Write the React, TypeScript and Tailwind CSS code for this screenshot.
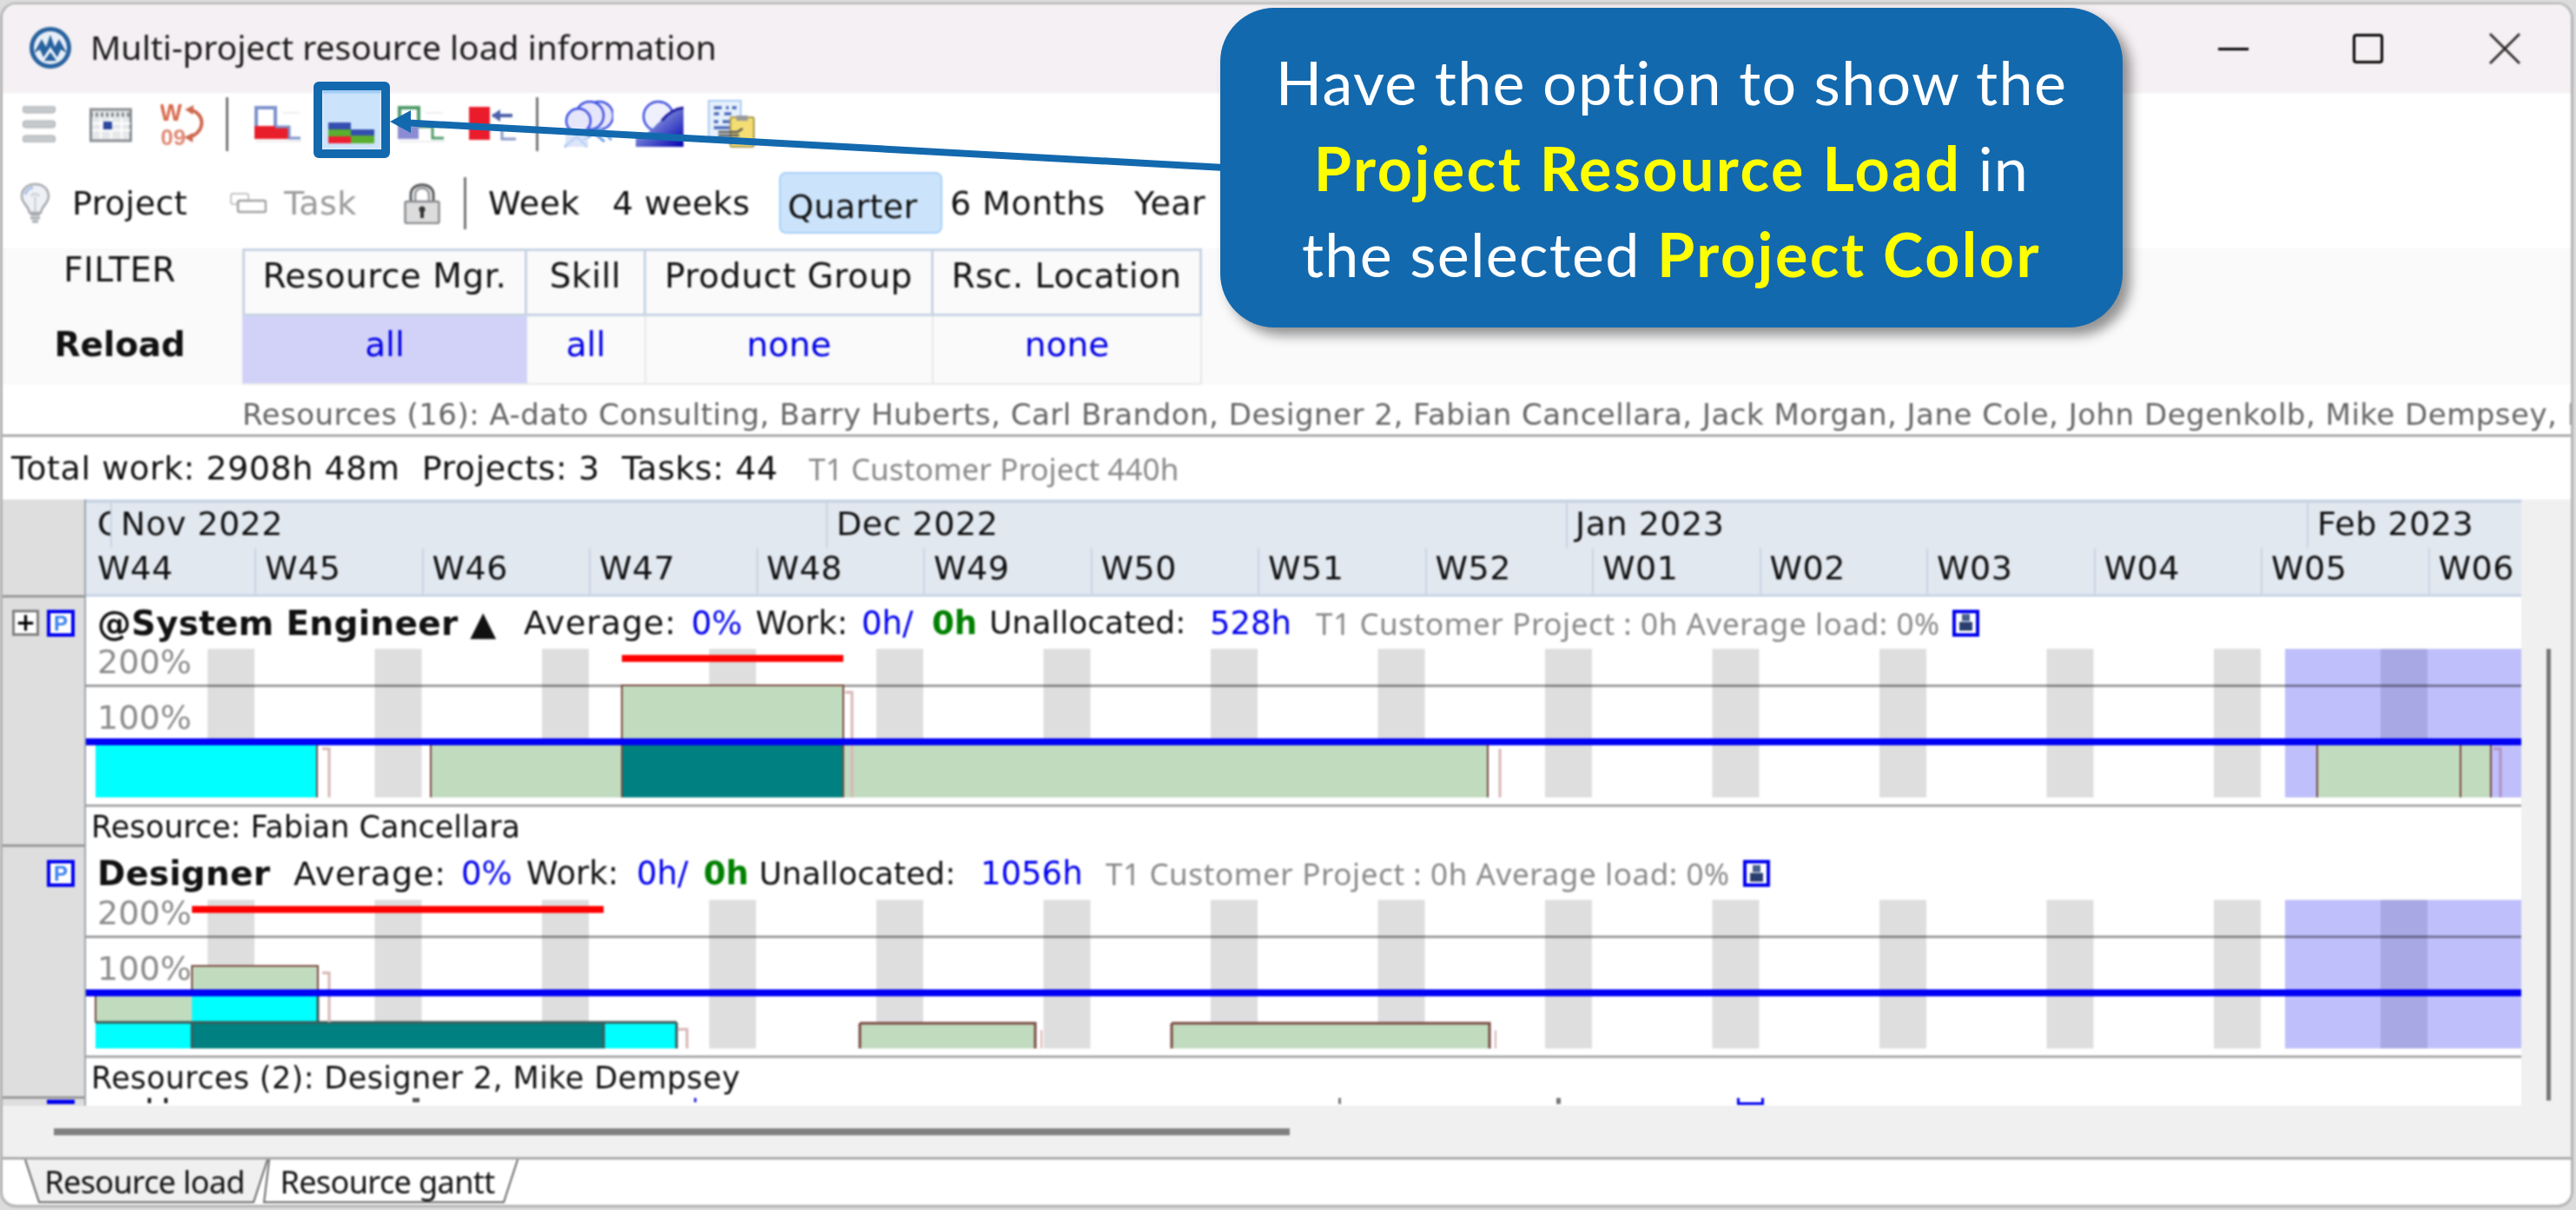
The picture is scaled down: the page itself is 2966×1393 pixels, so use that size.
import React from "react";

const STRIPES = [0, 1, 2, 3, 4, 5, 6, 7, 8, 9, 10, 11, 12].map((i) => 140 + 192.5 * i);
const WEEKS = ["W45", "W46", "W47", "W48", "W49", "W50", "W51", "W52", "W01", "W02", "W03", "W04", "W05", "W06"];
const GREEN = "#c1dbbf";
const BROWN = "#7a4a42";
const TEAL = "#008080";
const CYAN = "#00ffff";
const FAINT = "#d9b4b4";

function Logo() {
  return (
    <svg width="50" height="50" viewBox="0 0 50 50">
      <circle cx="25" cy="25" r="24" fill="#27629f" />
      <circle cx="25" cy="25" r="19" fill="#e8eef6" />
      <path d="M6 31 L15 15 L20 24 L25 10 L30 24 L35 15 L44 31 L37 27 L33 36 L25 24 L17 36 L13 27 Z" fill="#27629f" />
      <path d="M25 30 L18 40 L32 40 Z" fill="#27629f" />
    </svg>
  );
}

function Hamburger() {
  return (
    <svg width="38" height="42" viewBox="0 0 38 42">
      {[0, 17, 34].map((y) => (
        <rect key={y} x="0.5" y={y} width="37" height="8" rx="3" fill="#c6c9cc" stroke="#a8abae" />
      ))}
    </svg>
  );
}

function CalendarIcon() {
  return (
    <svg width="49" height="42" viewBox="0 0 49 42">
      <rect x="1.5" y="4" width="46" height="36" fill="#e6e8ea" stroke="#8a8e92" strokeWidth="3" />
      <path d="M1 10 H48" stroke="#8a8e92" strokeWidth="5" strokeDasharray="3 3" />
      <path d="M13 14 V38 M25 14 V38 M37 14 V38 M3 20 H47 M3 28 H47" stroke="#ffffff" strokeWidth="2" />
      <rect x="16" y="18" width="10" height="9" fill="#2f49a0" />
    </svg>
  );
}

function WeekIcon() {
  return (
    <svg width="52" height="50" viewBox="0 0 52 50">
      <text x="-1" y="21" fontFamily="'Liberation Sans',sans-serif" fontWeight="700" fontSize="27" fill="#d9694c">W</text>
      <text x="0" y="49" fontFamily="'Liberation Sans',sans-serif" fontWeight="700" fontSize="26" fill="#e08a74">09</text>
      <path d="M33 8 C52 12 52 34 33 40" fill="none" stroke="#cf6a50" strokeWidth="4" />
      <path d="M28 8 L38 3 L37 14 Z M27 40 L37 35 L37 46 Z" fill="#cf6a50" />
    </svg>
  );
}

function LoadIcon({ line, fill, low }: { line: string; fill: string; low: string }) {
  return (
    <svg width="54" height="42" viewBox="0 0 54 42">
      <path d="M32 8 H52 M2 41 H54" stroke="#eceef0" strokeWidth="2" />
      <path d="M2 24 V2 H24 V24" fill="none" stroke={line} strokeWidth="4" />
      <rect x="0" y="23" width={low === "wide" ? 41 : 24} height="15" fill={fill} />
      <path d="M24 24 H40 V37 H53" fill="none" stroke={line} strokeWidth="3" />
    </svg>
  );
}

function StackIcon() {
  return (
    <svg width="54" height="24" viewBox="0 0 54 24">
      <rect x="0" y="0" width="26" height="8" fill="#344fb0" />
      <rect x="0" y="8" width="26" height="8" fill="#5aae2e" />
      <rect x="0" y="16" width="26" height="8" fill="#ee1f33" />
      <rect x="26" y="8" width="27" height="7" fill="#344fb0" />
      <rect x="26" y="15" width="27" height="9" fill="#5aae2e" />
    </svg>
  );
}

function RedArrowIcon() {
  return (
    <svg width="55" height="42" viewBox="0 0 55 42">
      <rect x="0" y="1" width="24" height="38" fill="#ea1c2c" />
      <path d="M27 11 H50" stroke="#4d62ac" strokeWidth="4" />
      <path d="M26 11 L36 4 V18 Z" fill="#4d62ac" />
      <path d="M38 22 V38 H54" fill="none" stroke="#8a98c8" strokeWidth="3" />
    </svg>
  );
}

function PeopleIcon() {
  return (
    <svg width="56" height="56" viewBox="0 0 56 56">
      {[40, 29, 16].map((x, i) => (
        <g key={x}>
          <circle cx={x} cy={i === 2 ? 24 : 18} r={i === 2 ? 14 : 16} fill="#e6e6fb" stroke="#3d4fe0" strokeWidth="2.5" />
        </g>
      ))}
      <path d="M0 54 L14 42 L26 54 M22 46 L34 38 L46 48 M32 36 L42 34 L54 46" fill="none" stroke="#6ea0e8" strokeWidth="3" />
      <rect x="1" y="34" width="26" height="20" fill="#d5e0f8" opacity="0.8" />
    </svg>
  );
}

function SlopeIcon() {
  return (
    <svg width="56" height="56" viewBox="0 0 56 56">
      <defs>
        <linearGradient id="sl" x1="0" y1="0" x2="1" y2="1">
          <stop offset="0" stopColor="#c0d4f0" />
          <stop offset="1" stopColor="#0000b0" />
        </linearGradient>
      </defs>
      <circle cx="26" cy="19" r="17" fill="#eef0fc" stroke="#3d4fe0" strokeWidth="2.5" />
      <path d="M0 54 V44 C20 42 30 12 55 9 V54 Z" fill="url(#sl)" />
      <path d="M30 24 C38 14 46 10 55 9" fill="none" stroke="#2020a0" strokeWidth="3" />
    </svg>
  );
}

function ReportIcon() {
  return (
    <svg width="56" height="56" viewBox="0 0 56 56">
      <rect x="1" y="1" width="37" height="42" fill="#e6f0fd" stroke="#a9cdf2" strokeWidth="2" />
      <path d="M7 9 H16 M21 9 H24 M28 9 H33 M7 16 H13 M19 16 H27 M7 25 H12 M17 25 H25 M7 32 H33" stroke="#4a6ab8" strokeWidth="3.5" />
      <rect x="26" y="20" width="27" height="34" rx="2" fill="#f4dd72" stroke="#a89a50" strokeWidth="2" />
      <rect x="33" y="18" width="13" height="6" fill="#9a9a9a" />
      <path d="M12 37 H34 L40 33 M12 41 H36" stroke="#555" strokeWidth="2.5" fill="none" />
    </svg>
  );
}

function BulbIcon() {
  return (
    <svg width="35" height="48" viewBox="0 0 35 48">
      <path d="M17.5 2 C7 2 2 9 2 16 C2 24 10 27 11 35 H24 C25 27 33 24 33 16 C33 9 28 2 17.5 2 Z" fill="#eef1f5" stroke="#a6a9ad" strokeWidth="2.5" />
      <path d="M12 37 H23 M12 41 H23 M14 45 H21" stroke="#a6a9ad" strokeWidth="3" />
      <path d="M13 16 C15 12 20 12 22 16 M17.5 16 V34" stroke="#c8ccd2" strokeWidth="2" fill="none" />
      <path d="M6 14 C7 9 11 6 15 6" stroke="#a8c0e8" strokeWidth="3" fill="none" />
    </svg>
  );
}

function TaskIcon() {
  return (
    <svg width="42" height="24" viewBox="0 0 42 24">
      <rect x="1" y="1" width="20" height="12" rx="2" fill="#ffffff" stroke="#c4c4c4" strokeWidth="2" />
      <rect x="9" y="9" width="32" height="13" rx="2" fill="#ffffff" stroke="#a0a0a0" strokeWidth="2.5" />
    </svg>
  );
}

function LockIcon() {
  return (
    <svg width="42" height="48" viewBox="0 0 42 48">
      <path d="M8 22 V14 C8 -1 34 -1 34 14 V22" fill="none" stroke="#55585a" strokeWidth="3" />
      <path d="M13 22 V14 C13 4 29 4 29 14 V22" fill="none" stroke="#9a9da0" strokeWidth="3" />
      <rect x="1.5" y="22" width="39" height="25" rx="2" fill="#dcdcdc" stroke="#8a8d90" strokeWidth="2.5" />
      <circle cx="21" cy="31" r="3.5" fill="#333" />
      <rect x="19" y="32" width="4" height="9" fill="#333" />
    </svg>
  );
}

function PersonBox() {
  return (
    <div className="w-[31px] h-[31px] shrink-0 border-[4px] border-[#0000f0] bg-white flex items-center justify-center">
      <svg width="15" height="20" viewBox="0 0 15 20">
        <rect x="3" y="0" width="9" height="8" fill="#4a6090" />
        <rect x="0" y="9" width="15" height="10" fill="#2a3f70" />
      </svg>
    </div>
  );
}

function PBox() {
  return (
    <div className="w-[32px] h-[31px] border-[4px] border-[#0000f0] bg-white flex items-center justify-center text-[24px] leading-none font-bold text-[#3b80f0] font-['Liberation_Sans',sans-serif]">
      P
    </div>
  );
}

function Chart({ children, labels }: { children: React.ReactNode; labels: [number, number] }) {
  return (
    <svg width="2804" height="171" viewBox="0 0 2804 171" className="block shrink-0">
      <rect x="0" y="0" width="2804" height="171" fill="#ffffff" />
      {STRIPES.map((x) => (
        <rect key={x} x={x} y="0" width="54" height="171" fill="#dedede" />
      ))}
      <rect x="2532" y="0" width="272" height="171" fill="#bfbffb" />
      <rect x="2642" y="0" width="54" height="171" fill="#a8a8e4" />
      <rect x="0" y="41" width="2804" height="3" fill="#000000" fillOpacity="0.38" />
      <text x="13" y={labels[0]} fontSize="38" fill="#8c8c8c" fontFamily="'DejaVu Sans',sans-serif">200%</text>
      <text x="13" y={labels[1]} fontSize="38" fill="#8c8c8c" fontFamily="'DejaVu Sans',sans-serif">100%</text>
      {children}
      <rect x="0" y="103" width="2804" height="8" fill="#0000f4" />
    </svg>
  );
}

function Row1Bars() {
  return (
    <>
      <rect x="617" y="7" width="255" height="8" fill="#ff0000" />
      <rect x="617" y="42" width="255" height="64" fill={GREEN} stroke={BROWN} strokeWidth="2" />
      <rect x="11" y="110" width="256" height="61" fill={CYAN} />
      <rect x="397" y="110" width="220" height="61" fill={GREEN} />
      <rect x="617" y="110" width="255" height="61" fill={TEAL} />
      <rect x="872" y="110" width="742" height="61" fill={GREEN} />
      <path d="M266 110 V171 M397 110 V171 M617 110 V171 M872 42 V171 M1614 110 V171" stroke={BROWN} strokeWidth="2" />
      <path d="M272 115 H280 V171 M874 50 H882 V171 M1628 115 V171" fill="none" stroke={FAINT} strokeWidth="3" />
      <rect x="2569" y="110" width="200" height="61" fill={GREEN} />
      <path d="M2569 110 V171 M2734 110 V171 M2769 110 V171" stroke={BROWN} strokeWidth="2" />
      <path d="M2772 115 H2780 V171" fill="none" stroke="#b090c0" strokeWidth="3" />
    </>
  );
}

function Row2Bars() {
  return (
    <>
      <rect x="122" y="7" width="474" height="8" fill="#ff0000" />
      <rect x="122" y="76" width="145" height="30" fill={GREEN} stroke={BROWN} strokeWidth="2" />
      <rect x="11" y="110" width="111" height="31" fill={GREEN} />
      <rect x="122" y="110" width="145" height="31" fill={CYAN} />
      <rect x="11" y="142" width="111" height="29" fill={CYAN} />
      <rect x="122" y="142" width="474" height="29" fill={TEAL} />
      <rect x="596" y="142" width="84" height="29" fill={CYAN} />
      <path d="M11 141 H680 M680 141 V171 M122 141 V171 M596 141 V171 M267 106 V141" stroke="#3d5a58" strokeWidth="3" />
      <path d="M11 110 V141" stroke={BROWN} strokeWidth="2" />
      <path d="M272 84 H280 V141 M682 149 H692 V171" fill="none" stroke={FAINT} strokeWidth="3" />
      <rect x="891" y="142" width="202" height="29" fill={GREEN} />
      <rect x="1250" y="142" width="366" height="29" fill={GREEN} />
      <path d="M891 142 H1093 V171 M891 142 V171 M1250 142 H1616 V171 M1250 142 V171" fill="none" stroke={BROWN} strokeWidth="3" />
      <path d="M1100 150 V171 M1623 150 V171" stroke={FAINT} strokeWidth="2" />
    </>
  );
}

export default function App() {
  return (
    <div className="relative w-[2966px] h-[1393px] overflow-hidden bg-[#dcdcdc] pt-[3px] font-['DejaVu_Sans',sans-serif] text-[#111]">
      {/* window */}
      <div className="w-[2963px] h-[1387px] flex flex-col overflow-hidden bg-white rounded-t-[18px] rounded-b-[18px] border-t-[2px] border-x-[3px] border-b-[3px] border-[#b4b4b4] blur-[0.9px]">
        {/* title bar */}
        <div className="h-[102px] shrink-0 bg-[#f5f0f3] flex items-center">
          <div className="ml-[30px] -mt-[2px]"><Logo /></div>
          <span className="ml-[21px] -mt-[5px] text-[39px] leading-none whitespace-nowrap text-[#1a1a1a] font-['Noto_Sans',sans-serif]">Multi-project resource load information</span>
          <div className="ml-auto flex items-center">
            <div className="w-[35px] h-[3px] bg-black" />
            <div className="ml-[120px] w-[35px] h-[34px] border-[3px] border-black rounded-[4px]" />
            <svg className="ml-[122px] mr-[58px]" width="36" height="36" viewBox="0 0 36 36">
              <path d="M1 1 L35 35 M35 1 L1 35" stroke="#222" strokeWidth="2.5" />
            </svg>
          </div>
        </div>

        {/* toolbar 1 */}
        <div className="h-[72px] shrink-0 flex items-center">
          <div className="ml-[23px] w-[38px] flex"><Hamburger /></div>
          <div className="ml-[39px] w-[49px] flex"><CalendarIcon /></div>
          <div className="ml-[33px] w-[52px] flex"><WeekIcon /></div>
          <div className="ml-[23px] w-[3px] h-[62px] bg-[#777]" />
          <div className="ml-[30px] w-[54px] flex"><LoadIcon line="#7d92cc" fill="#e81e2a" low="wide" /></div>
          <div className="ml-[24px] w-[68px] h-[68px] -mt-[10px] bg-[#cce4fb] border-t-[3px] border-[#8cc2f5] flex items-end justify-center pb-[7px]"><StackIcon /></div>
          <div className="ml-[19px] w-[54px] flex"><LoadIcon line="#4f9a6a" fill="#8c8cd4" low="narrow" /></div>
          <div className="ml-[28px] w-[55px] flex"><RedArrowIcon /></div>
          <div className="ml-[22px] w-[3px] h-[62px] bg-[#777]" />
          <div className="ml-[30px] w-[56px] flex"><PeopleIcon /></div>
          <div className="ml-[26px] w-[56px] flex"><SlopeIcon /></div>
          <div className="ml-[27px] w-[56px] flex"><ReportIcon /></div>
        </div>

        {/* toolbar 2 */}
        <div className="h-[107px] shrink-0 pt-[2px] flex items-center text-[38px] tracking-[0.4px] leading-none whitespace-nowrap">
          <div className="ml-[20px] w-[35px] flex"><BulbIcon /></div>
          <span className="ml-[25px] w-[137px]">Project</span>
          <div className="ml-[45px] w-[42px] flex"><TaskIcon /></div>
          <span className="ml-[20px] w-[86px] text-[#9a9a9a]">Task</span>
          <div className="ml-[52px] w-[42px] flex"><LockIcon /></div>
          <div className="ml-[27px] w-[3px] h-[60px] bg-[#777]" />
          <span className="ml-[25px] w-[105px]">Week</span>
          <span className="ml-[38px] w-[162px]">4 weeks</span>
          <div className="ml-[30px] w-[188px] h-[71px] bg-[#cce4fb] border-[2px] border-[#a8d0f8] rounded-[8px] flex items-center pl-[8px] pt-[8px]">Quarter</div>
          <span className="ml-[9px] w-[174px]">6 Months</span>
          <span className="ml-[38px] w-[86px]">Year</span>
        </div>

        {/* filter */}
        <div className="h-[157px] shrink-0 bg-[#fafafa] flex text-[39px] leading-none whitespace-nowrap">
          <div className="w-[270px] shrink-0 flex flex-col items-center">
            <div className="h-[78px] pt-[5px] flex items-start tracking-[0.6px]">FILTER</div>
            <div className="pt-[13px] font-bold">Reload</div>
          </div>
          <div className="w-[1105px] ml-[6px] shrink-0 flex flex-col">
            <div className="flex h-[78px] border-y-[3px] border-[#c8d4e4] border-l-[3px] border-r-[3px] tracking-[0.5px]">
              <div className="w-[325px] border-r-[3px] border-[#c8d4e4] text-center pt-[9px]">Resource Mgr.</div>
              <div className="w-[137px] border-r-[3px] border-[#c8d4e4] text-center pt-[9px]">Skill</div>
              <div className="w-[331px] border-r-[3px] border-[#c8d4e4] text-center pt-[9px]">Product Group</div>
              <div className="flex-1 text-center pt-[9px]">Rsc. Location</div>
            </div>
            <div className="flex h-[79px] text-[#0000e6] border-b-[2px] border-r-[2px] border-[#e8e8ec]">
              <div className="w-[328px] bg-[#d2d2f8] text-center pt-[13px]">all</div>
              <div className="w-[137px] border-r-[2px] border-[#e8e8ec] text-center pt-[13px]">all</div>
              <div className="w-[331px] border-r-[2px] border-[#e8e8ec] text-center pt-[13px]">none</div>
              <div className="flex-1 text-center pt-[13px]">none</div>
            </div>
          </div>
        </div>

        {/* resources line */}
        <div className="h-[57px] shrink-0 pl-[276px] pt-[12px] flex items-center overflow-hidden whitespace-nowrap text-[34px] tracking-[0.5px] text-[#666]">
          Resources (16): A-dato Consulting, Barry Huberts, Carl Brandon, Designer 2, Fabian Cancellara, Jack Morgan, Jane Cole, John Degenkolb, Mike Dempsey, R
        </div>

        {/* totals */}
        <div className="h-[75px] shrink-0 border-t-[3px] border-[#aaaaaa] flex items-center pl-[10px] whitespace-nowrap text-[38px] tracking-[0.55px] leading-none">
          <span className="w-[918px]">Total work: 2908h 48m&nbsp; Projects: 3&nbsp; Tasks: 44</span>
          <span className="text-[35px] text-[#8a8a8a] font-['Noto_Sans',sans-serif] tracking-[0.1px]">T1 Customer Project 440h</span>
        </div>

        {/* main */}
        <div className="h-[698px] shrink-0 flex">
          {/* left col */}
          <div className="w-[96px] shrink-0 flex flex-col bg-[#dedede] border-r-[2px] border-[#9aa4ae]">
            <div className="h-[110px] mt-[3px] shrink-0 border-b-[3px] border-[#999]" />
            <div className="h-[287px] shrink-0 border-b-[3px] border-[#999] flex items-start pt-[14px]">
              <div className="ml-[11px] w-[31px] h-[30px] border-[3px] border-[#808080] bg-white flex items-center justify-center text-[28px] leading-none font-bold text-black">+</div>
              <div className="ml-[9px]"><PBox /></div>
            </div>
            <div className="h-[290px] shrink-0 border-b-[3px] border-[#999] pt-[15px] pl-[51px]"><PBox /></div>
            <div className="pl-[51px] pt-[1px]"><div className="w-[32px] h-[5px] bg-[#0000f0]" /></div>
          </div>

          {/* timeline */}
          <div className="w-[2804px] shrink-0 overflow-hidden flex flex-col bg-white">
            <div className="h-[112px] shrink-0 bg-[#e2e8f0] border-t-[4px] border-b-[3px] border-[#c8d4e4] text-[38px] tracking-[0.5px] leading-none whitespace-nowrap flex flex-col overflow-hidden">
              <div className="h-[52px] shrink-0 flex">
                <div className="w-[30px] shrink-0 overflow-hidden border-r-[2px] border-[#c8d4e4] pl-[13px] pt-[5px]">Oct</div>
                <div className="w-[824px] shrink-0 border-r-[2px] border-[#c8d4e4] pl-[10px] pt-[5px]">Nov 2022</div>
                <div className="w-[852px] shrink-0 border-r-[2px] border-[#c8d4e4] pl-[10px] pt-[5px]">Dec 2022</div>
                <div className="w-[853px] shrink-0 border-r-[2px] border-[#c8d4e4] pl-[9px] pt-[5px]">Jan 2023</div>
                <div className="flex-1 pl-[10px] pt-[5px]">Feb 2023</div>
              </div>
              <div className="flex-1 flex">
                <div className="w-[194px] shrink-0 pl-[13px] pt-[4px]">W44</div>
                {WEEKS.map((w) => (
                  <div key={w} className="w-[192.5px] shrink-0 border-l-[2px] border-[#c8d4e4] pl-[10px] pt-[4px]">{w}</div>
                ))}
              </div>
            </div>

            {/* row 1 */}
            <div className="h-[288px] shrink-0 flex flex-col">
              <div className="h-[60px] shrink-0 flex items-center pl-[13px] text-[37px] leading-none whitespace-nowrap">
                <span className="w-[462px] font-bold text-[39px] tracking-[0.3px]">@System Engineer ▲</span>
                <span className="ml-[29px] w-[175px] text-[38px] tracking-[0.9px]">Average:</span>
                <span className="ml-[18px] w-[62px] text-[#0000f0]">0%</span>
                <span className="ml-[12px] w-[110px]">Work:</span>
                <span className="ml-[12px] w-[62px] text-[#0000f0]">0h/</span>
                <span className="ml-[19px] w-[52px] font-bold text-[#008000]">0h</span>
                <span className="ml-[14px] w-[239px] text-[36px]">Unallocated:</span>
                <span className="ml-[15px] w-[94px] text-[#0000f0]">528h</span>
                <span className="ml-[28px] w-[719px] text-[35px] text-[#8a8a8a] font-['Noto_Sans',sans-serif] tracking-[0.6px]">T1 Customer Project : 0h Average load: 0%</span>
                <div className="ml-[14px]"><PersonBox /></div>
              </div>
              <Chart labels={[28, 92]}><Row1Bars /></Chart>
              <div className="h-[8px] shrink-0" />
              <div className="h-[3px] shrink-0 bg-[#aaaaaa]" />
              <div className="flex-1 flex items-center pl-[6px] text-[35px] leading-none whitespace-nowrap">Resource: Fabian Cancellara</div>
            </div>

            {/* row 2 */}
            <div className="h-[289px] shrink-0 flex flex-col">
              <div className="h-[61px] shrink-0 flex items-center pl-[13px] text-[37px] leading-none whitespace-nowrap">
                <span className="w-[197px] font-bold text-[39px] tracking-[0.3px]">Designer</span>
                <span className="ml-[29px] w-[177px] text-[38px] tracking-[0.9px]">Average:</span>
                <span className="ml-[16px] w-[61px] text-[#0000f0]">0%</span>
                <span className="ml-[14px] w-[114px]">Work:</span>
                <span className="ml-[13px] w-[62px] text-[#0000f0]">0h/</span>
                <span className="ml-[15px] w-[50px] font-bold text-[#008000]">0h</span>
                <span className="ml-[14px] w-[241px] text-[36px]">Unallocated:</span>
                <span className="ml-[14px] w-[118px] text-[#0000f0]">1056h</span>
                <span className="ml-[26px] w-[724px] text-[35px] text-[#8a8a8a] font-['Noto_Sans',sans-serif] tracking-[0.6px]">T1 Customer Project : 0h Average load: 0%</span>
                <div className="ml-[10px]"><PersonBox /></div>
              </div>
              <Chart labels={[28, 92]}><Row2Bars /></Chart>
              <div className="h-[8px] shrink-0" />
              <div className="h-[3px] shrink-0 bg-[#aaaaaa]" />
              <div className="flex-1 flex items-center pl-[6px] text-[35px] tracking-[0.4px] leading-none whitespace-nowrap">Resources (2): Designer 2, Mike Dempsey</div>
            </div>

            {/* tops of the row that scrolls out of view */}
            <div className="h-[9px] shrink-0 flex items-start">
              <div className="ml-[71px] w-[4px] h-[6px] bg-[#222]" />
              <div className="ml-[15px] w-[4px] h-[6px] bg-[#222]" />
              <div className="ml-[282px] w-[8px] h-[5px] bg-[#555]" />
              <div className="ml-[316px] w-[3px] h-[5px] bg-[#3030e0]" />
              <div className="ml-[739px] w-[3px] h-[7px] bg-[#777]" />
              <div className="ml-[248px] w-[5px] h-[7px] bg-[#777]" />
              <div className="ml-[203px] w-[31px] h-[8px] border-[3px] border-t-0 border-[#0000f0]" />
            </div>
          </div>

          {/* right scrollbar */}
          <div className="flex-1 bg-[#f0f0f0] pt-[172px] pl-[29px]">
            <div className="w-[5px] h-[520px] bg-[#777]" />
          </div>
        </div>

        {/* horizontal scrollbar */}
        <div className="h-[62px] shrink-0 bg-[#f0f0f0] pl-[59px] pt-[26px] border-b-[3px] border-[#aaaaaa]">
          <div className="w-[1423px] h-[8px] bg-[#808080]" />
        </div>

        {/* tabs */}
        <div className="flex-1 flex pl-[25px] text-[36px] leading-none whitespace-nowrap font-['Noto_Sans',sans-serif]">
          <div className="relative w-[282px] h-[51px] flex items-center justify-center">
            <svg className="absolute inset-0" width="282" height="51" viewBox="0 0 282 51">
              <path d="M1 0 L17 49 H264 L280 0" fill="#f0f0f0" stroke="#666" strokeWidth="2" />
            </svg>
            <span className="relative -ml-[5px] tracking-[-0.6px]">Resource load</span>
          </div>
          <div className="relative w-[296px] h-[51px] -ml-[8px] flex items-center justify-center">
            <svg className="absolute inset-0" width="296" height="51" viewBox="0 0 296 51">
              <path d="M8 0 L2 49 H278 L294 0" fill="#ffffff" stroke="#666" strokeWidth="2" />
            </svg>
            <span className="relative -ml-[8px] tracking-[-0.6px]">Resource gantt</span>
          </div>
        </div>
      </div>

      {/* annotation: highlight around the toolbar button */}
      <div className="absolute left-[361px] top-[94px] w-[88px] h-[88px] border-[10px] border-[#1369ae] rounded-[6px]" />

      {/* annotation: arrow */}
      <svg className="absolute left-0 top-0 pointer-events-none" width="2966" height="400" viewBox="0 0 2966 400">
        <path d="M462 141 L1410 193" stroke="#1369ae" strokeWidth="8" />
        <path d="M449 140 L473 127 L473 153 Z" fill="#1369ae" />
      </svg>

      {/* annotation: callout */}
      <div className="absolute left-[1405px] top-[9px] w-[1039px] h-[368px] rounded-[62px] bg-[#1369ae] shadow-[9px_9px_14px_rgba(0,0,0,0.42)] flex flex-col items-center justify-center text-white text-[70px] leading-[99px] font-['Lato',sans-serif] whitespace-nowrap tracking-[1.3px]">
        <div>Have the option to show the</div>
        <div><span className="font-bold text-[#ffff00] tracking-[2.5px]">Project Resource Load</span> in</div>
        <div>the selected <span className="font-bold text-[#ffff00] tracking-[2.5px]">Project Color</span></div>
      </div>
    </div>
  );
}
